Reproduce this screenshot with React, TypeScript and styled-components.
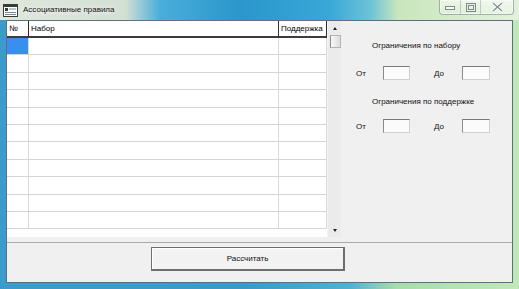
import styled, { createGlobalStyle } from "styled-components";

const GlobalStyle = createGlobalStyle`
  html, body {
    margin: 0;
    padding: 0;
    overflow: hidden;
  }
  body {
    font-family: "Liberation Sans", Arial, sans-serif;
  }
`;

const ROW_COUNT = 11;

const App = () => {
  const rows = Array.from({ length: ROW_COUNT }, (_, i) => i);

  return (
    <>
      <GlobalStyle />
      <Window>
        <TitleBar>
          <AppIcon />
          <Title>Ассоциативные правила</Title>
          <CaptionGroup>
            <CaptionButton $width={20}>
              <svg width="10" height="5" viewBox="0 0 10 5">
                <rect x="0.5" y="1.5" width="9" height="3" fill="#fff" stroke="#5c6670" />
              </svg>
            </CaptionButton>
            <CaptionButton $width={19}>
              <svg width="10" height="9" viewBox="0 0 10 9">
                <rect x="0.5" y="0.5" width="9" height="8" fill="none" stroke="#5c6670" />
                <rect x="2.5" y="2.5" width="5" height="4" fill="none" stroke="#5c6670" />
              </svg>
            </CaptionButton>
            <CaptionButton $width={32} $last>
              <svg width="11" height="10" viewBox="0 0 11 10">
                <path d="M1 1 L10 9 M10 1 L1 9" stroke="#fff" strokeWidth="3" />
                <path d="M1 1 L10 9 M10 1 L1 9" stroke="#5c6670" strokeWidth="1.2" />
              </svg>
            </CaptionButton>
          </CaptionGroup>
        </TitleBar>

        <Client>
          <TopArea>
            <Table>
              <Grid>
                <HeaderCell>№</HeaderCell>
                <HeaderCell>Набор</HeaderCell>
                <HeaderCell>Поддержка</HeaderCell>
                {rows.map((i) => (
                  <Row key={i}>
                    <Cell $selected={i === 0} />
                    <Cell />
                    <Cell />
                  </Row>
                ))}
              </Grid>
              <ScrollBar>
                <Arrow $up />
                <Thumb />
                <ScrollTrack />
                <Arrow />
              </ScrollBar>
            </Table>

            <SidePanel>
              <Heading $gap={13}>Ограничения по набору</Heading>
              <RangeRow>
                <Label>От</Label>
                <TextBox />
                <span />
                <Label>До</Label>
                <TextBox />
              </RangeRow>
              <Heading $top={17} $gap={10}>
                Ограничения по поддержке
              </Heading>
              <RangeRow>
                <Label>От</Label>
                <TextBox />
                <span />
                <Label>До</Label>
                <TextBox />
              </RangeRow>
            </SidePanel>
          </TopArea>

          <BottomArea>
            <Button>Рассчитать</Button>
          </BottomArea>
        </Client>
      </Window>
    </>
  );
};

const AppIcon = () => (
  <IconWrap>
    <svg width="15" height="13" viewBox="0 0 15 13">
      <rect x="0.5" y="0.5" width="14" height="12" fill="#fff" stroke="#3b3b3b" />
      <rect x="1" y="1" width="13" height="2" fill="#3b3b3b" />
      <rect x="2" y="4" width="3" height="3" fill="#3b3b3b" />
      <rect x="6" y="4.5" width="7" height="1" fill="#7a8a9a" />
      <rect x="2" y="8" width="11" height="1" fill="#7a8a9a" />
      <rect x="2" y="10" width="11" height="1" fill="#7a8a9a" />
    </svg>
  </IconWrap>
);

const Window = styled.div`
  width: 519px;
  height: 289px;
  box-sizing: border-box;
  display: flex;
  flex-direction: column;
  padding: 0 6px 6px 6px;
  background:
    linear-gradient(
        90deg,
        #dfe7dc 0px,
        #d4e0d4 125px,
        #4aaedb 160px,
        #2a96cb 240px,
        #39a8d8 330px,
        #6cc2d8 370px,
        #c8e6bc 398px,
        #e3f1dc 519px
      )
      top left / 100% 20px no-repeat,
    linear-gradient(
      90deg,
      #3b9ccc 0px,
      #3a9acb 250px,
      #4fb2d2 350px,
      #a6dcae 395px,
      #c2e8b8 519px
    );
`;

const TitleBar = styled.div`
  height: 20px;
  display: flex;
  align-items: flex-start;
`;

const IconWrap = styled.div`
  margin: 4px 0 0 -3px;
  width: 15px;
  height: 13px;
  display: flex;
`;

const Title = styled.div`
  margin: 3px 0 0 5px;
  font-family: "Liberation Sans", Arial, sans-serif;
  font-size: 8px;
  line-height: 14px;
  color: #111;
  text-shadow:
    0 0 4px #fff,
    0 0 8px rgba(255, 255, 255, 0.9),
    0 0 12px rgba(255, 255, 255, 0.8);
`;

const CaptionGroup = styled.div`
  margin-left: auto;
  margin-right: -1px;
  height: 14px;
  display: flex;
  border: 1px solid rgba(70, 95, 100, 0.45);
  border-top: none;
  border-radius: 0 0 4px 4px;
  background: linear-gradient(
    rgba(255, 255, 255, 0.55),
    rgba(255, 255, 255, 0.25)
  );
  box-shadow: inset 0 0 0 1px rgba(255, 255, 255, 0.5);
`;

const CaptionButton = styled.div<{ $width: number; $last?: boolean }>`
  width: ${({ $width }) => $width}px;
  display: flex;
  align-items: center;
  justify-content: center;
  border-right: ${({ $last }) => ($last ? "none" : "1px solid rgba(70, 95, 100, 0.35)")};
  opacity: 0.75;
`;

const Client = styled.div`
  flex: 1;
  display: flex;
  flex-direction: column;
  background: #f0f0f0;
  border: 1px solid #5f707c;
`;

const TopArea = styled.div`
  height: 221px;
  display: flex;
  border-bottom: 1px solid #a9a9a9;
`;

const Table = styled.div`
  width: 334px;
  height: 216px;
  display: flex;
  background: #fff;
  overflow: hidden;
`;

const Grid = styled.div`
  width: 320px;
  display: grid;
  grid-template-columns: 22px 250px 48px;
  grid-auto-rows: 17.4px;
  grid-template-rows: 17px;
  align-content: start;
  font-size: 8px;
`;

const HeaderCell = styled.div`
  box-sizing: border-box;
  border-right: 1px solid #2e2e2e;
  border-bottom: 2px solid #3c3c3c;
  padding: 0 0 0 2px;
  line-height: 15px;
  color: #000;
  white-space: nowrap;
  overflow: hidden;
`;

const Row = styled.div`
  display: contents;
`;

const Cell = styled.div<{ $selected?: boolean }>`
  box-sizing: border-box;
  border-right: 1px solid #d9d9d9;
  border-bottom: 1px solid #d4d4d4;
  background: ${({ $selected }) => ($selected ? "#3a8ef0" : "#fff")};
`;

const ScrollBar = styled.div`
  width: 14px;
  display: flex;
  flex-direction: column;
  align-items: center;
  background: #ebebeb;
  border-left: 1px solid #f4f4f4;
`;

const Arrow = styled.div<{ $up?: boolean }>`
  height: 14px;
  width: 14px;
  display: flex;
  align-items: center;
  justify-content: center;
  &::after {
    content: "";
    border-left: 2.5px solid transparent;
    border-right: 2.5px solid transparent;
    ${({ $up }) =>
      $up ? "border-bottom: 3px solid #222;" : "border-top: 3px solid #222;"}
  }
`;

const Thumb = styled.div`
  width: 9px;
  height: 11px;
  margin-left: 1px;
  background: linear-gradient(90deg, #f8f8f8, #dcdcdc);
  border: 1px solid #b4b4b4;
  border-left-color: #8a8a8a;
`;

const ScrollTrack = styled.div`
  flex: 1;
`;

const SidePanel = styled.div`
  flex: 1;
  display: flex;
  flex-direction: column;
  padding-top: 19px;
  font-size: 8px;
  color: #111;
`;

const Heading = styled.div<{ $top?: number; $gap: number }>`
  margin: ${({ $top }) => $top ?? 0}px 0 ${({ $gap }) => $gap}px 31px;
  line-height: 12px;
`;

const RangeRow = styled.div`
  display: grid;
  grid-template-columns: 27px 27px 24px 28px 28px;
  align-items: center;
  height: 14px;
  padding-left: 15px;
`;

const Label = styled.div`
  line-height: 12px;
  padding-top: 3px;
`;

const TextBox = styled.div`
  box-sizing: border-box;
  height: 14px;
  background: #fbfbfb;
  border: 1px solid #d0d0d0;
  border-top-color: #7a7a7a;
  border-left-color: #8a8a8a;
`;

const BottomArea = styled.div`
  flex: 1;
  padding: 4px 0 0 144px;
`;

const Button = styled.div`
  box-sizing: border-box;
  width: 194px;
  height: 24px;
  display: flex;
  align-items: center;
  justify-content: center;
  font-size: 8px;
  color: #111;
  background: #f2f2f2;
  border: 1px solid #6e6e6e;
  border-right-width: 2px;
  border-bottom-width: 2px;
  box-shadow: inset 1px 1px 0 #fff;
`;

export default App;
